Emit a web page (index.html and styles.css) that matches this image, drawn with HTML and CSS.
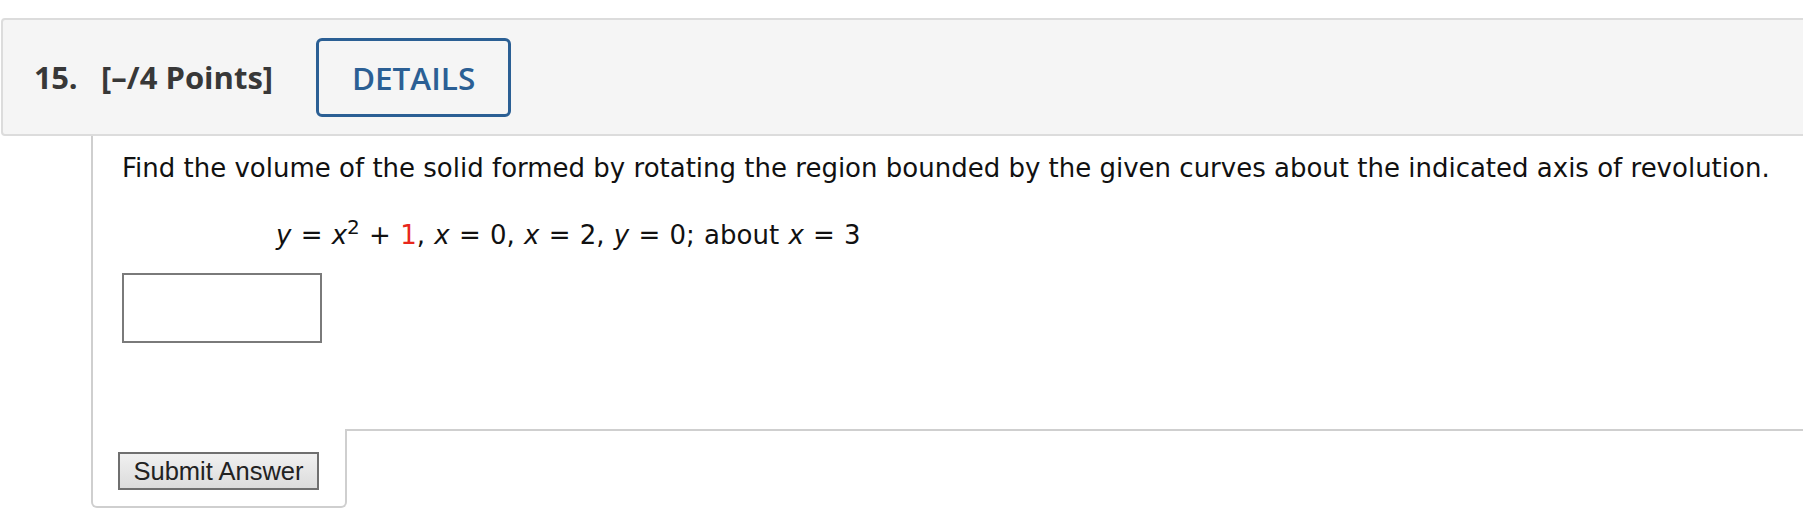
FILE: index.html
```html
<!DOCTYPE html>
<html>
<head>
<meta charset="utf-8">
<link rel="stylesheet" href="styles.css">
</head>
<body>
<div class="page">
  <div class="qhead">
    <span class="qnum">15.</span>
    <span class="qpts">[–/4 Points]</span>
    <button class="details">DETAILS</button>
  </div>
  <div class="question">
    <div class="qbody">
      <p class="prompt">Find the volume of the solid formed by rotating the region bounded by the given curves about the indicated axis of revolution.</p>
      <p class="eq"><i>y</i> = <i>x</i><sup>2</sup> + <span class="red">1</span>, <i>x</i> = 0, <i>x</i> = 2, <i>y</i> = 0; about <i>x</i> = 3</p>
      <div class="answer"></div>
    </div>
    <div class="qfoot">
      <div class="tab"><button class="submit">Submit Answer</button></div>
      <div class="rest"></div>
    </div>
  </div>
</div>
</body>
</html>
```
FILE: styles.css
```css
html, body {
  margin: 0;
  padding: 0;
  background: #fff;
  overflow: hidden;
}
.page {
  padding: 18px 0 0 1px;
  width: 1803px;
  box-sizing: border-box;
}
.qhead {
  display: flex;
  align-items: center;
  height: 114px;
  margin-right: -10px;
  background: #f5f5f5;
  border: 2px solid #dcdcdc;
  border-radius: 4px;
  padding-left: 31px;
  font-family: "Open Sans", sans-serif;
  color: #383838;
}
.qnum, .qpts {
  font-weight: 700;
  font-size: 31px;
  letter-spacing: -0.4px;
}
.qpts {
  margin-left: 24px;
  letter-spacing: 0;
}
.details {
  margin-left: 43px;
  width: 195px;
  height: 79px;
  background: transparent;
  border: 3px solid #2b5f94;
  border-radius: 6px;
  font-family: "Open Sans", sans-serif;
  font-weight: 600;
  font-size: 31.5px;
  color: #2b5f94;
  padding: 0;
}
.question {
  margin-left: 90px;
  font-family: "DejaVu Sans", Verdana, sans-serif;
  color: #111;
}
.qbody {
  border-left: 2px solid #cfcfcf;
  padding: 14px 0 86px 29px;
}
.prompt {
  margin: 0;
  font-size: 26px;
  line-height: 36px;
  white-space: nowrap;
}
.eq {
  margin: 31px 0 0 154px;
  font-size: 26px;
  line-height: 36px;
  word-spacing: 1px;
}
.eq sup {
  font-size: 20px;
  line-height: 0;
  vertical-align: 10px;
}
.red {
  color: #e8261c;
}
.answer {
  margin-top: 20px;
  width: 196px;
  height: 66px;
  border: 2px solid #7a7a7a;
}
.qfoot {
  display: flex;
}
.tab {
  width: 256px;
  border-left: 2px solid #cfcfcf;
  border-right: 2px solid #cfcfcf;
  border-bottom: 2px solid #cfcfcf;
  border-bottom-left-radius: 6px;
  border-bottom-right-radius: 6px;
  padding: 23px 0 16px 25px;
  box-sizing: border-box;
}
.rest {
  flex: 1;
  border-top: 2px solid #cfcfcf;
}
.submit {
  display: block;
  width: 201px;
  height: 38px;
  padding: 0;
  border: 2px solid #6f6f6f;
  background: linear-gradient(#f0f0f0, #dcdcdc);
  font-family: "Liberation Sans", Arial, sans-serif;
  font-size: 25.5px;
  color: #222;
}
```
